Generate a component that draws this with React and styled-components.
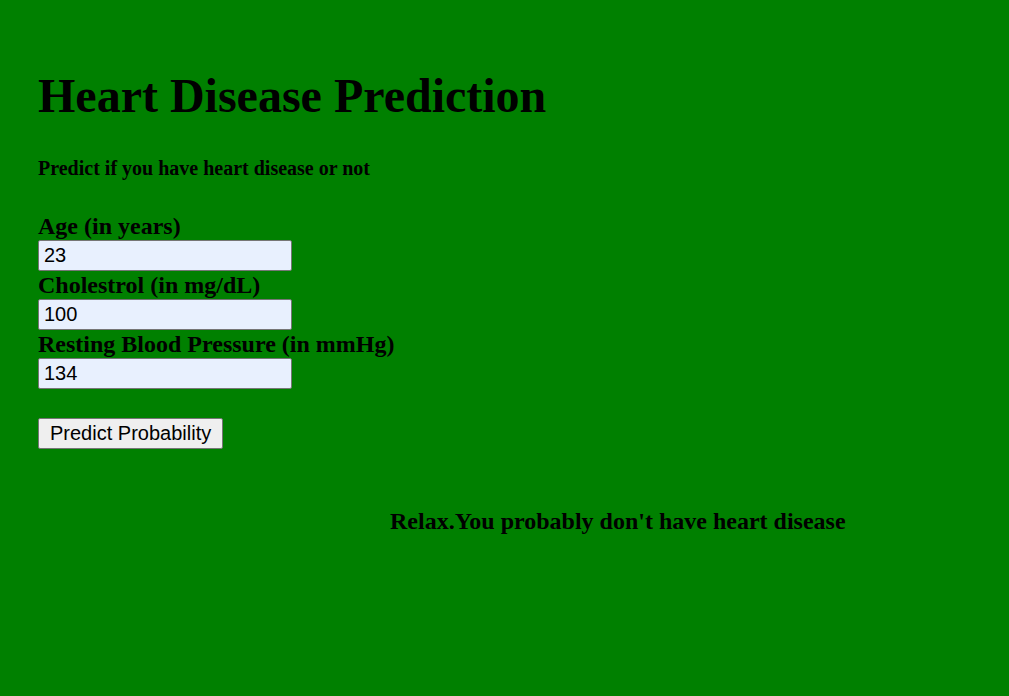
import React from "react";
import styled, { createGlobalStyle } from "styled-components";

const Global = createGlobalStyle`
  html, body { margin: 0; padding: 0; background: #008000; }
  body { font-family: "Liberation Serif", "Times New Roman", serif; color: #000; }
`;

const Page = styled.div`
  padding: 30px 38px;
  min-height: 696px;
  box-sizing: border-box;
`;

const Title = styled.h1`
  font-size: 48px;
  font-weight: bold;
  margin: 38px 0 0;
`;

const Subtitle = styled.h3`
  font-size: 20px;
  font-weight: bold;
  margin: 34px 0 0;
`;

const Form = styled.form`
  margin-top: 32px;
  display: flex;
  flex-direction: column;
  align-items: flex-start;
`;

const Label = styled.label`
  font-size: 24px;
  font-weight: bold;
  line-height: 28px;
`;

const Input = styled.input`
  width: 254px;
  height: 31px;
  box-sizing: border-box;
  font-family: "Liberation Sans", Arial, sans-serif;
  font-size: 20px;
  padding: 1px 5px;
  background: #e8f0fe;
  border: 1px solid #767676;
  border-radius: 2px;
  color: #000;
`;

const Button = styled.button`
  margin-top: 29px;
  height: 31px;
  box-sizing: border-box;
  font-family: "Liberation Sans", Arial, sans-serif;
  font-size: 20px;
  padding: 1px 11px;
  background: #efefef;
  border: 1px solid #767676;
  border-radius: 2px;
  color: #000;
`;

const Result = styled.h3`
  font-size: 24px;
  font-weight: bold;
  margin: 59px 0 0 352px;
`;

export default function App() {
  return (
    <Page>
      <Global />
      <Title>Heart Disease Prediction</Title>
      <Subtitle>Predict if you have heart disease or not</Subtitle>
      <Form onSubmit={(e) => e.preventDefault()}>
        <Label htmlFor="age">Age (in years)</Label>
        <Input id="age" defaultValue="23" />
        <Label htmlFor="chol">Cholestrol (in mg/dL)</Label>
        <Input id="chol" defaultValue="100" />
        <Label htmlFor="bp">Resting Blood Pressure (in mmHg)</Label>
        <Input id="bp" defaultValue="134" />
        <Button type="submit">Predict Probability</Button>
      </Form>
      <Result>Relax.You probably don't have heart disease</Result>
    </Page>
  );
}
